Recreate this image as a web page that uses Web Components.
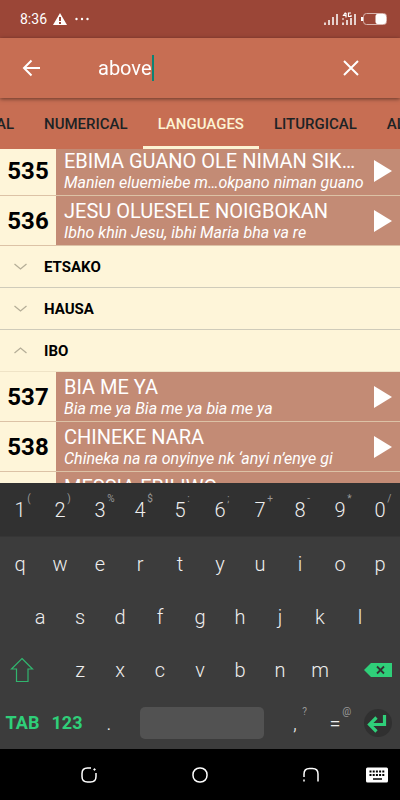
<!DOCTYPE html>
<html lang="en">
<head>
<meta charset="utf-8">
<meta name="viewport" content="width=device-width, initial-scale=1">
<title>Hymns</title>
<style>
html, body {
  height: 100%;
}
body {
  margin: 0;
  font-family: Roboto, "Noto Sans", sans-serif;
}
</style>
</head>
<body>
<hymn-app></hymn-app>

<script>
const reset = `
button {
  margin: 0;
  padding: 0;
  border: 0;
  background: none;
  color: inherit;
  font: inherit;
}
svg {
  display: block;
}
`

// attaches a shadow root holding the markup and its style
function define (name, style, html, setup) {
  customElements.define(
    name,
    class extends HTMLElement {
      constructor () {
        super()
        this.attachShadow({mode: 'open'})
      }

      connectedCallback () {
        const markup = typeof html === 'function' ? html(this) : html
        this.shadowRoot.innerHTML = `<style>${reset}${style}</style>${markup}`
        if (setup) setup(this.shadowRoot)
      }
    }
  )
}

define('status-bar', `
:host {
  display: flex;
  align-items: center;
  flex: none;
  height: 38px;
  padding: 0 13px 0 20px;
  background: #9b4637;
  color: #fff;
  font-size: 14px;
}
.warn { margin-left: 6px; }
.dots { margin-left: 8px; }
.signals { margin-left: auto; }
.battery { margin-left: 5px; }
`, `
<span>8:36</span>
<svg class="warn" width="14" height="14" viewBox="0 0 14 14"><path d="M7 1L14 13H0z" fill="#fff"/><path d="M7 5v4M7 10v2" stroke="#9b4637" stroke-width="2"/></svg>
<svg class="dots" width="14" height="4" viewBox="0 0 14 4" fill="#fff"><circle cx="1.5" cy="2" r="1.2"/><circle cx="7" cy="2" r="1.2"/><circle cx="12.5" cy="2" r="1.2"/></svg>
<svg class="signals" width="32" height="14" viewBox="0 0 32 14" fill="none" stroke="#fff">
  <path d="M1 10.500v2.500M5 8v5M9 5v8M13 2v11" stroke-width="1.500"/>
  <path d="M19 10.500v2.500M23 8v5M27 6v7M31 2v11" stroke-width="1.500"/>
  <path d="M18 7h2M21.500 .5L19.500 3.500h3M22 1v4.500M27 1h-2.500v3.500H27V3" stroke-width="1.200"/>
</svg>
<svg class="battery" width="26" height="12" viewBox="0 0 26 12"><rect x="2.500" y=".5" width="23" height="11" rx="3" fill="none" stroke="#d9b5ae"/><rect x="14.500" y="1" width="10.500" height="10" rx="2" fill="#fff"/><path d="M1 4v4" stroke="#fff" stroke-width="2"/></svg>
`)

define('search-bar', `
:host {
  display: flex;
  align-items: center;
  flex: none;
  height: 60px;
  padding: 0 37px 0 20px;
  background: #c76e53;
  color: #fff;
  box-shadow: 0 1px 4px rgba(0, 0, 0, .5);
  z-index: 1;
}
label {
  display: flex;
  align-items: center;
  flex: 1;
  margin-left: 54px;
}
input {
  field-sizing: content;
  min-width: 0;
  padding: 0;
  border: 0;
  outline: 0;
  background: none;
  color: #fff;
  font: 20px/24px Roboto, sans-serif;
}
.caret {
  width: 2px;
  height: 26px;
  background: #0b8374;
}
`, `
<button aria-label="Back"><svg width="24" height="24" viewBox="0 0 24 24" fill="none" stroke="#fff" stroke-width="2"><path d="M20 12H4M11.500 4.500L4 12l7.500 7.500"/></svg></button>
<label><input type="text" value="above" aria-label="Search"><span class="caret"></span></label>
<button aria-label="Clear"><svg width="24" height="24" viewBox="0 0 24 24" fill="none" stroke="#fff" stroke-width="2"><path d="M5 5l14 14M19 5L5 19"/></svg></button>
`)

define('tab-strip', `
:host {
  display: flex;
  flex: none;
  height: 51px;
  background: #c76e53;
  overflow-x: scroll;
  scrollbar-width: none;
}
`, `<slot></slot>`)

define('tab-item', `
:host {
  display: flex;
  flex: none;
}
button {
  padding: 3px 15px 0;
  border-bottom: 3px solid transparent;
  color: #1c2325;
  font-size: 15px;
  font-weight: 500;
}
:host([selected]) button {
  border-color: #fdf3d3;
  color: #fdf3d3;
}
`, `<button><slot></slot></button>`)

define('song-list', `
:host {
  display: block;
  flex: 1;
  min-height: 0;
  background: #fef5d9;
  overflow-y: scroll;
  scrollbar-width: none;
}
`, `<slot></slot>`)

define('song-row', `
:host {
  display: flex;
  height: 49px;
  border-bottom: 1px solid #dcc2a6;
  color: #fff;
}
.num {
  display: flex;
  align-items: center;
  justify-content: center;
  width: 56px;
  flex: none;
  color: #000;
  font-size: 24px;
  font-weight: 700;
}
.body {
  display: flex;
  align-items: center;
  flex: 1;
  min-width: 0;
  padding: 0 8px;
  background: #c38b75;
}
.text {
  flex: 1;
  min-width: 0;
  white-space: nowrap;
}
.title {
  font-size: 20px;
  line-height: 24px;
}
.line {
  min-height: 20px;
  font-size: 16px;
  line-height: 20px;
  font-style: italic;
}
`, el => `
<div class="num">${el.getAttribute('number')}</div>
<div class="body">
  <div class="text">
    <div class="title"><slot name="title"></slot></div>
    <div class="line"><slot></slot></div>
  </div>
  <button aria-label="Play"><svg width="18" height="22" viewBox="0 0 18 22"><path d="M0 0l18 11L0 22z" fill="#fff"/></svg></button>
</div>
`)

define('group-header', `
:host {
  display: block;
}
button {
  display: flex;
  align-items: center;
  width: 100%;
  height: 42px;
  padding: 0 14px;
  border-bottom: 1px solid #cfcbba;
  color: #000;
  font-size: 15px;
  font-weight: 700;
}
svg {
  margin-right: 17px;
}
:host([open]) svg {
  transform: rotate(180deg);
}
:host([open]) button {
  border-color: #efe3c6;
}
`, `
<button><svg width="13" height="7" viewBox="0 0 13 7" fill="none" stroke="#b5ae98" stroke-width="1.300"><path d="M.5 1l6 5 6-5"/></svg><slot></slot></button>
`)

define('key-cap', `
:host {
  display: flex;
  position: relative;
}
button {
  flex: 1;
  color: #eee;
  font-size: 20px;
  font-weight: 300;
}
small {
  position: absolute;
  top: 10px;
  left: 68%;
  color: #999;
  font-size: 10px;
  line-height: 12px;
}
:host([accent]) button {
  color: #2fcf79;
  font-size: 18px;
  font-weight: 700;
}
`, el => `
<button><slot></slot></button>
${el.hasAttribute('hint') ? `<small>${el.getAttribute('hint')}</small>` : ''}
`)

const keys = (chars, hints = '') => [...chars].map((c, i) =>
  `<key-cap${hints[i] ? ` hint="${hints[i]}"` : ''}>${c}</key-cap>`).join('')

define('soft-keyboard', `
:host {
  display: block;
  flex: none;
  background: #3c3c3c;
}
.row {
  display: grid;
  grid-template-columns: repeat(10, 1fr);
  height: 53px;
}
.digits {
  background: #313131;
  border-bottom: 1px solid #363636;
}
.home {
  grid-template-columns: repeat(9, 1fr);
  padding: 0 5%;
}
.shift {
  grid-template-columns: 3fr repeat(7, 2fr) 3fr;
}
.bottom {
  grid-template-columns: 45fr 44fr 40fr 146fr 40fr 40fr 45fr;
}
.shift > button {
  display: flex;
  align-items: center;
  padding: 0 8px 0 10px;
}
.shift > button:last-child {
  justify-content: flex-end;
}
.space {
  align-self: center;
  height: 32px;
  margin: 0 11px;
  border-radius: 5px;
  background: #525252;
}
.enter {
  place-self: center;
}
`, `
<div class="row digits">${keys('1234567890', '()%$:;+-*/')}</div>
<div class="row">${keys('qwertyuiop')}</div>
<div class="row home">${keys('asdfghjkl')}</div>
<div class="row shift">
  <button aria-label="Shift"><svg width="24" height="26" viewBox="0 0 24 26" fill="none" stroke="#31b56e" stroke-width="1.200"><path d="M12 1.500L22.500 12H18v12.500H6.500V12H1.500z"/></svg></button>
  ${keys('zxcvbnm')}
  <button aria-label="Delete"><svg width="28" height="16" viewBox="0 0 28 16"><path d="M0 8l7-7h21v14H7z" fill="#2fcf79"/><path d="M13 4.500l7 7M20 4.500l-7 7" stroke="#333" stroke-width="1.800"/></svg></button>
</div>
<div class="row bottom">
  <key-cap accent>TAB</key-cap>
  <key-cap accent>123</key-cap>
  <key-cap>.</key-cap>
  <button class="space" aria-label="Space"></button>
  <key-cap hint="?">,</key-cap>
  <key-cap hint="@">=</key-cap>
  <button class="enter" aria-label="Enter"><svg width="28" height="28" viewBox="0 0 28 28" fill="none"><circle cx="14" cy="14" r="14" fill="#303030"/><path d="M20.500 6v9.500H5M12.500 8.500l-7 7 7 7" stroke="#2fcf79" stroke-width="3.200"/></svg></button>
</div>
`)

define('nav-bar', `
:host {
  display: grid;
  flex: none;
  grid-template-columns: 33fr 111fr 111fr 111fr 34fr;
  height: 51px;
  background: #000;
}
button {
  display: grid;
  place-items: center;
}
button:first-of-type {
  grid-column-start: 2;
}
button:last-of-type {
  justify-items: start;
}
`, `
<button aria-label="Recent"><svg width="16" height="16" viewBox="0 0 16 16" fill="none" stroke="#fff" stroke-width="1.500"><path d="M10 1H6.500C3 1 1 3 1 6.500v3C1 13 3 15 6.500 15h3c3.500 0 5.500-2 5.500-5.500V6"/><circle cx="13.500" cy="2.500" r=".8" fill="#fff" stroke-width=".8"/></svg></button>
<button aria-label="Home"><svg width="16" height="16" viewBox="0 0 16 16" fill="none" stroke="#fff" stroke-width="1.500"><rect x="1" y="1" width="14" height="14" rx="6.500"/></svg></button>
<button aria-label="Back"><svg width="16" height="16" viewBox="0 0 16 16" fill="none" stroke="#fff" stroke-width="1.500"><path d="M1 10V7C1 3.500 3 1.500 6.500 1.500h3C13 1.500 15 3.500 15 7v7.500M1 12.500v2"/></svg></button>
<button aria-label="Hide keyboard"><svg width="22" height="16" viewBox="0 0 22 16"><rect y=".5" width="22" height="15" rx="1.500" fill="#fff"/><path d="M3.500 4.500h15M3.500 8h15" stroke="#000" stroke-width="2" stroke-dasharray="2 1.200"/><path d="M7 12h9" stroke="#000" stroke-width="1.500"/></svg></button>
`)

define('hymn-app', `
:host {
  display: flex;
  flex-direction: column;
  height: 100vh;
  overflow: hidden;
}
`, `
<status-bar></status-bar>
<search-bar></search-bar>
<tab-strip>
  <tab-item>AL</tab-item>
  <tab-item>NUMERICAL</tab-item>
  <tab-item selected>LANGUAGES</tab-item>
  <tab-item>LITURGICAL</tab-item>
  <tab-item>AL</tab-item>
</tab-strip>
<song-list>
  <song-row number="535"><span slot="title">EBIMA GUANO OLE NIMAN SIK…</span>Manien eluemiebe m…okpano niman guano</song-row>
  <song-row number="536"><span slot="title">JESU OLUESELE NOIGBOKAN</span>Ibho khin Jesu, ibhi Maria bha va re</song-row>
  <group-header>ETSAKO</group-header>
  <group-header>HAUSA</group-header>
  <group-header open>IBO</group-header>
  <song-row number="537"><span slot="title">BIA ME YA</span>Bia me ya Bia me ya bia me ya</song-row>
  <song-row number="538"><span slot="title">CHINEKE NARA</span>Chineka na ra onyinye nk ‘anyi n’enye gi</song-row>
  <song-row number=""><span slot="title">MESSIA EBILIWO</span></song-row>
</song-list>
<soft-keyboard></soft-keyboard>
<nav-bar></nav-bar>
`, root => {
  // children are all laid out by now
  root.querySelector('tab-strip').scrollLeft = 19
  root.querySelector('song-list').scrollTop = 3
})
</script>
</body>
</html>
